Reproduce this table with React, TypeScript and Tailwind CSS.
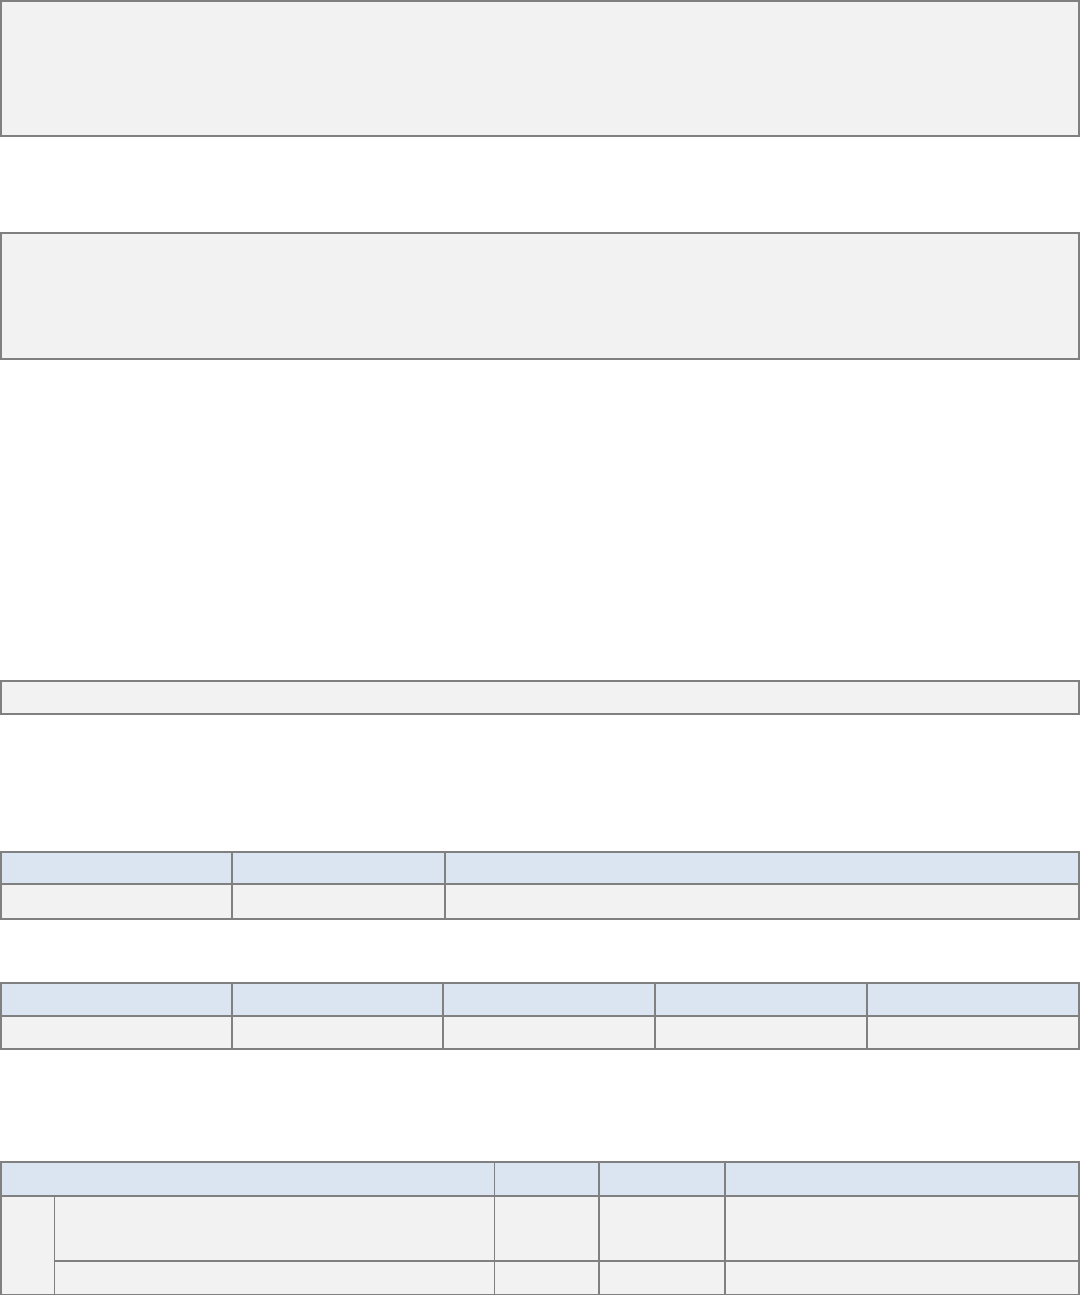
import React from "react";

const cell = "bg-[#f2f2f2] border-r-2 border-b-2 border-[#808080]";
const head = "bg-[#dbe5f1] border-r-2 border-b-2 border-[#808080]";

function Panel({ h }: { h: string }) {
  return <div className={`w-full ${h} bg-[#f2f2f2] border-2 border-[#808080]`} />;
}

export default function App() {
  return (
    <div className="w-[1080px] bg-white font-['Liberation_Sans',sans-serif]">
      <Panel h="h-[137px]" />
      <div className="mt-[95px]">
        <Panel h="h-[128px]" />
      </div>
      <div className="mt-[320px]">
        <Panel h="h-[35px]" />
      </div>

      {/* first table: 3 columns */}
      <div className="mt-[136px] grid grid-cols-[231px_213px_1fr] grid-rows-[32px_35px] border-l-2 border-t-2 border-[#808080]">
        <div className={head} />
        <div className={head} />
        <div className={head} />
        <div className={cell} />
        <div className={cell} />
        <div className={cell} />
      </div>

      {/* second table: 5 columns */}
      <div className="mt-[62px] grid grid-cols-[231px_211px_212px_212px_1fr] grid-rows-[33px_33px] border-l-2 border-t-2 border-[#808080]">
        {[0, 1, 2, 3, 4].map((i) => (
          <div key={"h" + i} className={head} />
        ))}
        {[0, 1, 2, 3, 4].map((i) => (
          <div key={"c" + i} className={cell} />
        ))}
      </div>

      {/* third table: grouped rows */}
      <div className="mt-[111px] grid grid-cols-[53px_440px_105px_126px_1fr] grid-rows-[34px_65px_34px] border-l-2 border-t-2 border-[#808080]">
        <div className="col-span-2 bg-[#dbe5f1] border-r border-b-2 border-[#808080]" />
        <div className={head} />
        <div className={head} />
        <div className={head} />

        <div className="row-span-2 bg-[#f2f2f2] border-r border-b-2 border-[#808080]" />
        <div className="bg-[#f2f2f2] border-r border-b-2 border-[#808080]" />
        <div className={cell} />
        <div className={cell} />
        <div className={cell} />

        <div className="bg-[#f2f2f2] border-r border-b-2 border-[#808080]" />
        <div className={cell} />
        <div className={cell} />
        <div className={cell} />
      </div>
    </div>
  );
}
